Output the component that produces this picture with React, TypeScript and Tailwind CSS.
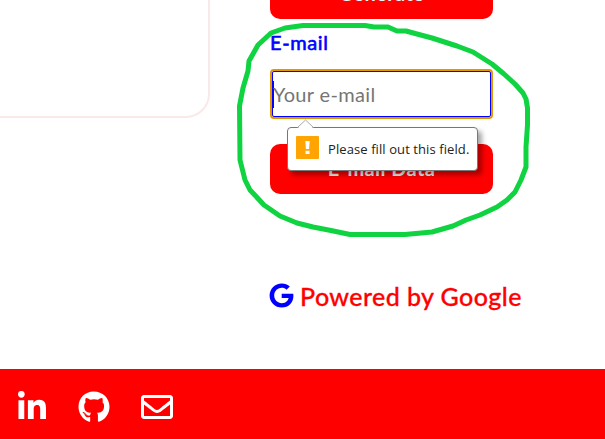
import { FaGithub, FaGoogle, FaLinkedinIn, FaRegEnvelope } from "react-icons/fa";

function ActionButton({ label }: { label: string }) {
  return (
    <button className="flex h-[50px] w-[223px] shrink-0 items-center justify-center rounded-[10px] bg-[#ff0000] pb-[2px] text-[20px] font-bold leading-none tracking-[0.4px] text-[#efefef]">
      {label}
    </button>
  );
}

function ValidationBubble() {
  return (
    <div className="absolute left-[17px] top-[58px] flex h-[44px] w-[191px] items-center rounded-[4px] border border-[#777777] bg-white pl-2 shadow-[4px_4px_5px_rgba(0,0,0,0.35)]">
      <svg className="absolute left-[9px] top-[-9px]" width="18" height="10" viewBox="0 0 18 10">
        <path d="M0.5 9.5 L8.5 1 L16.5 9.5 V10 H0.5 Z" fill="white" />
        <path d="M0.5 8.5 L8.5 1 L16.5 8.5" fill="none" stroke="#aaaaaa" />
      </svg>
      <svg className="mb-[3px] shrink-0" width="23" height="23" viewBox="0 0 23 23">
        <rect width="23" height="23" rx="1" fill="#ffa400" />
        <path d="M9.3 5 H13.7 L13.1 13 H9.9 Z M9.5 14.7 H13.5 V18 H9.5 Z" fill="white" />
      </svg>
      <span className="ml-[9px] whitespace-nowrap font-['Open_Sans','Noto_Sans',sans-serif] text-[13px] leading-none tracking-[0.09px] text-[#222222]">
        Please fill out this field.
      </span>
    </div>
  );
}

export default function App() {
  return (
    <div className="relative flex h-[439px] w-[605px] flex-col overflow-hidden bg-white font-['Lato','Open_Sans',sans-serif]">
      <main className="flex h-[369px] shrink-0 overflow-hidden">
        <div className="h-[118px] w-[210px] shrink-0 rounded-br-[24px] border-b-2 border-r-2 border-[#f9e9e9]" />
        <section className="-mt-[31px] ml-[60px] flex flex-col items-start">
          <ActionButton label="Generate" />
          <label htmlFor="email" className="mt-[10px] h-[26px] text-[20px] font-normal leading-[26px] tracking-[0.6px] text-[#0000ff] [-webkit-text-stroke:0.6px_#0000ff]">
            E-mail
          </label>
          <div className="relative mt-[14px] h-[50px] w-[223px] rounded-[4px] border-2 border-[#e59700]">
            <div className="flex h-full items-center rounded-[2px] border border-[#0000ff]">
              <span className="h-[27px] w-px bg-[#0000ff]" />
              <input
                id="email"
                placeholder="Your e-mail"
                className="-ml-px mb-px w-[200px] text-[20px] tracking-[0.35px] outline-none placeholder:text-[#757575]"
              />
            </div>
            <div className="absolute -left-[2px] -top-[2px] z-10">
              <ValidationBubble />
            </div>
          </div>
          <div className="mt-[25px]">
            <ActionButton label="E-mail Data" />
          </div>
          <div className="mt-[84px] flex h-[36px] items-center text-[25px] font-medium leading-none text-[#ff0000]">
            <FaGoogle className="-ml-px mb-px size-[25px] text-[#0000ff]" />
            <span className="ml-[6px] whitespace-nowrap tracking-[0.42px] [-webkit-text-stroke:0.3px_#ff0000]">Powered by Google</span>
          </div>
        </section>
      </main>
      <footer className="flex h-[70px] shrink-0 items-center gap-[30px] bg-[#ff0000] pl-4 pt-[5px] text-white">
        <FaLinkedinIn className="size-[32px]" />
        <FaGithub className="size-[32px]" />
        <FaRegEnvelope className="ml-px size-[32px]" />
      </footer>
      <svg className="pointer-events-none absolute inset-0 z-20" width="605" height="439" viewBox="0 0 605 439">
        <path
          d="M239.5 106 L243 88 L248 71 L249 61 L258 45 L271 33 L285 28 L303 25.5 L365 25.5 L374 27 L388 27 L397 31 L406 31 L417 34 L432 38 L457 46 L473 52 L492 64 L504 74 L515 84 L523 93 L526 99 L527.5 108 L527.5 125 L526 147 L526 167 L521 180 L515 192 L507 200 L497 207 L480 215 L466 220 L453 226 L432 232 L405 234.5 L350 234.5 L331 230.5 L313 227 L297 223 L280 216 L264 205 L250 190 L245 180 L240 160 Z"
          fill="none"
          stroke="#10d341"
          strokeWidth="5"
          strokeLinejoin="round"
        />
      </svg>
    </div>
  );
}
